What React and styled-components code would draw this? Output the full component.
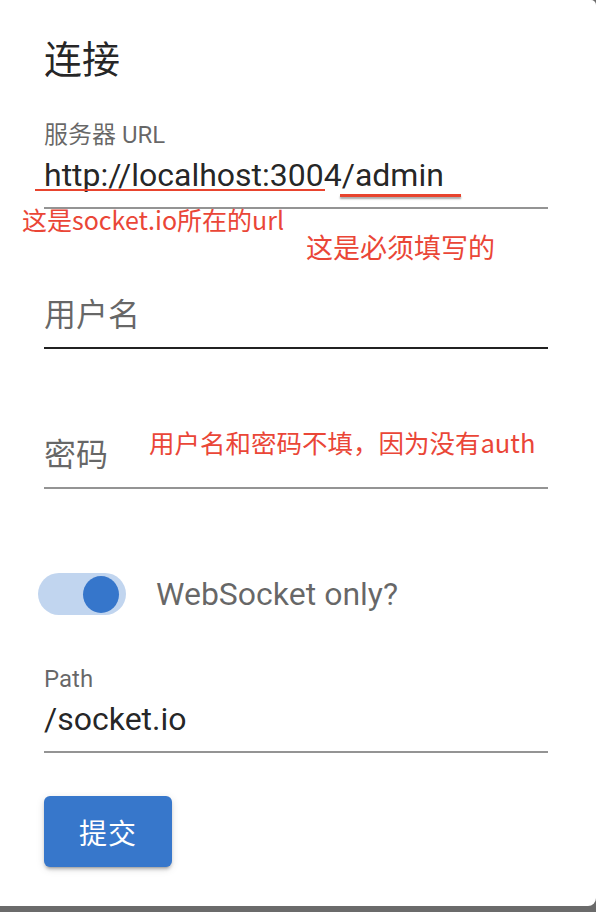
import React from "react";
import styled, { createGlobalStyle } from "styled-components";

const Global = createGlobalStyle`
  html, body { margin: 0; padding: 0; background: #6b6b6b; }
  body { font-family: Roboto, "Noto Sans CJK SC", sans-serif; }
  #root { width: 596px; }
`;

const Card = styled.div`
  position: relative;
  box-sizing: border-box;
  width: 596px;
  height: 906px;
  background: #fff;
  border-radius: 0 5px 8px 0;
  padding: 28px 48px 0 44px;
  display: flex;
  flex-direction: column;
`;

const Title = styled.div`
  font-size: 38px;
  line-height: 64px;
  height: 64px;
  color: rgba(0, 0, 0, 0.87);
  margin-bottom: 5px;
`;

const Field = styled.div`
  display: flex;
  flex-direction: column;
  height: 140px;
`;

const Control = styled.div`
  display: flex;
  flex-direction: column;
  padding: ${(p) => (p.$empty ? "58px" : "26px")} 0 12px;
  border-bottom: 2px solid
    ${(p) => (p.$strong ? "rgba(0,0,0,0.87)" : "rgba(0,0,0,0.42)")};
`;

const Label = styled.div`
  font-size: 24px;
  line-height: 24px;
  height: 24px;
  color: rgba(0, 0, 0, 0.6);
  margin-bottom: 8px;
  white-space: nowrap;
`;

const Value = styled.div`
  font-size: 32px;
  line-height: 40px;
  height: 40px;
  color: ${(p) => (p.$placeholder ? "rgba(0,0,0,0.6)" : "rgba(0,0,0,0.87)")};
  white-space: nowrap;
`;

const SwitchRow = styled.div`
  display: flex;
  align-items: center;
  gap: 30px;
  height: 50px;
  margin: 52px 0 22px -6px;
`;

const Track = styled.div`
  box-sizing: border-box;
  width: 88px;
  height: 42px;
  border-radius: 21px;
  background: #c1d5ef;
  display: flex;
  align-items: center;
  justify-content: flex-end;
  padding-right: 7px;
`;

const Thumb = styled.div`
  width: 36px;
  height: 37px;
  border-radius: 50%;
  background: #3676cb;
`;

const SwitchLabel = styled.div`
  font-size: 32px;
  line-height: 40px;
  color: rgba(0, 0, 0, 0.6);
  white-space: nowrap;
`;

const Button = styled.button`
  width: 128px;
  height: 71px;
  margin-top: 15px;
  border: none;
  border-radius: 6px;
  background: #3777cb;
  color: #fff;
  font-family: Roboto, "Noto Sans CJK SC", sans-serif;
  font-size: 28px;
  letter-spacing: 0.04em;
  box-shadow: 0 4px 2px -3px rgba(0, 0, 0, 0.2),
    0 3px 3px 0 rgba(0, 0, 0, 0.14), 0 2px 8px 0 rgba(0, 0, 0, 0.12);
  padding: 0;
`;

const Note = styled.div`
  position: absolute;
  left: ${(p) => p.$left}px;
  top: ${(p) => p.$top}px;
  font-family: "Noto Sans CJK SC", sans-serif;
  font-size: ${(p) => p.$size}px;
  line-height: 1;
  color: #ea4637;
  white-space: nowrap;
`;

const Mark = styled.div`
  position: absolute;
  left: ${(p) => p.$left}px;
  top: ${(p) => p.$top}px;
  width: ${(p) => p.$width}px;
  height: ${(p) => p.$thick}px;
  background: #e8442e;
  box-shadow: ${(p) => (p.$shadow ? "0 2px 2px rgba(0,0,0,0.35)" : "none")};
`;

export default function App() {
  return (
    <>
      <Global />
      <Card>
        <Title>连接</Title>
        <Field>
          <Control>
            <Label>服务器 URL</Label>
            <Value>http://localhost:3004/admin</Value>
          </Control>
        </Field>
        <Field>
          <Control $empty $strong>
            <Value $placeholder>用户名</Value>
          </Control>
        </Field>
        <Field>
          <Control $empty>
            <Value $placeholder>密码</Value>
          </Control>
        </Field>
        <SwitchRow>
          <Track>
            <Thumb />
          </Track>
          <SwitchLabel>WebSocket only?</SwitchLabel>
        </SwitchRow>
        <Field>
          <Control>
            <Label>Path</Label>
            <Value>/socket.io</Value>
          </Control>
        </Field>
        <div>
          <Button>提交</Button>
        </div>

        <Mark $left={35} $top={189} $width={290} $thick={2} />
        <Mark $left={340} $top={194} $width={121} $thick={3} $shadow />
        <Note $left={22} $top={207} $size={25}>
          这是socket.io所在的url
        </Note>
        <Note $left={306} $top={233} $size={27}>
          这是必须填写的
        </Note>
        <Note $left={149} $top={429} $size={25.5}>
          用户名和密码不填，因为没有auth
        </Note>
      </Card>
    </>
  );
}
